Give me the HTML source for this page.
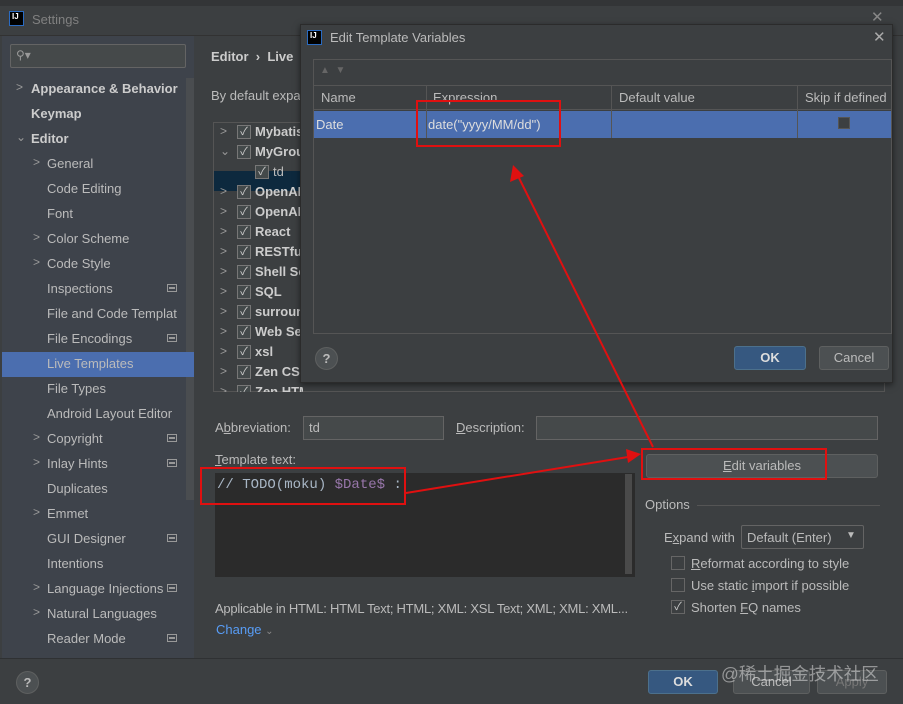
<!DOCTYPE html>
<html><head><meta charset="utf-8"><style>
*{margin:0;padding:0;box-sizing:border-box}
body{width:903px;height:704px;background:#3c3f41;font-family:"Liberation Sans","Noto Sans CJK SC",sans-serif;font-size:13px;color:#bbbbbb;position:relative;overflow:hidden}
.a{position:absolute;white-space:nowrap}
.side{left:2px;top:36px;width:192px;height:622px;background:#3e434b}
.si{position:absolute;left:47px;font-size:13px;color:#bbb}
.chev{position:absolute;font-size:12px;color:#999}
.bold{font-weight:bold;color:#ccc}
.pin{position:absolute;left:167px;width:10px;height:8px;border:1px solid #999;background:linear-gradient(#999,#999) center/6px 2px no-repeat}
.tr{position:absolute;left:0;height:20px;width:100%}
.cb{position:absolute;width:14px;height:14px;border:1px solid #777;background:#43494a;color:#ccc;font-size:11px;line-height:12px;text-align:center}
.btn{position:absolute;border:1px solid #5e6060;background:#4c5052;border-radius:3px;text-align:center;color:#bbb;line-height:22px}
.ok{background:#365880;border-color:#4c708c;font-weight:bold;color:#ddd}
.inp{position:absolute;border:1px solid #646464;background:#45494a}
.rb{position:absolute;border:2px solid #e01010}
.help{position:absolute;width:23px;height:23px;border-radius:50%;background:#4c5052;border:1px solid #5e6060;color:#bbb;text-align:center;line-height:21px;font-weight:bold}
</style></head><body>
<div class="a" style="left:0;top:0;width:903px;height:6px;background:#333537"></div>
<div class="a" style="left:0;top:35px;width:903px;height:1px;background:#323232"></div>
<div class="a" style="left:9px;top:11px;width:15px;height:15px;background:#000;border:1px solid #2a6bc2;color:#fff;font-size:8px;font-weight:bold;line-height:9px;padding-left:2px">IJ</div>
<div class="a" style="left:32px;top:12px;color:#808080;font-size:13px">Settings</div>
<div class="a" style="left:871px;top:8px;color:#888;font-size:15px">✕</div>

<div class="a side"></div>
<div class="inp" style="left:10px;top:44px;width:176px;height:24px;border-radius:2px;background:#45494a"></div>
<div class="a" style="left:16px;top:48px;color:#999;font-size:12px">⚲▾</div>
<div class="a" style="left:186px;top:78px;width:8px;height:422px;background:#4a4d50"></div>
<div class="a" style="left:2px;top:352px;width:192px;height:25px;background:#4b6eaf"></div>
<div class="a" style="left:0;top:0;width:195px;height:660px">
<span class="chev" style="left:16px;top:80px">&gt;</span><span class="si bold" style="left:31px;top:81px">Appearance &amp; Behavior</span>
<span class="si bold" style="left:31px;top:106px">Keymap</span>
<span class="chev" style="left:16px;top:130px">⌄</span><span class="si bold" style="left:31px;top:131px">Editor</span>
<span class="chev" style="left:33px;top:155px">&gt;</span><span class="si" style="top:156px">General</span>
<span class="si" style="top:181px">Code Editing</span>
<span class="si" style="top:206px">Font</span>
<span class="chev" style="left:33px;top:230px">&gt;</span><span class="si" style="top:231px">Color Scheme</span>
<span class="chev" style="left:33px;top:255px">&gt;</span><span class="si" style="top:256px">Code Style</span>
<span class="si" style="top:281px">Inspections</span><span class="pin" style="top:284px"></span>
<span class="si" style="top:306px">File and Code Templat</span>
<span class="si" style="top:331px">File Encodings</span><span class="pin" style="top:334px"></span>
<span class="si" style="top:356px">Live Templates</span>
<span class="si" style="top:381px">File Types</span>
<span class="si" style="top:406px">Android Layout Editor</span>
<span class="chev" style="left:33px;top:430px">&gt;</span><span class="si" style="top:431px">Copyright</span><span class="pin" style="top:434px"></span>
<span class="chev" style="left:33px;top:455px">&gt;</span><span class="si" style="top:456px">Inlay Hints</span><span class="pin" style="top:459px"></span>
<span class="si" style="top:481px">Duplicates</span>
<span class="chev" style="left:33px;top:505px">&gt;</span><span class="si" style="top:506px">Emmet</span>
<span class="si" style="top:531px">GUI Designer</span><span class="pin" style="top:534px"></span>
<span class="si" style="top:556px">Intentions</span>
<span class="chev" style="left:33px;top:580px">&gt;</span><span class="si" style="top:581px">Language Injections</span><span class="pin" style="top:584px"></span>
<span class="chev" style="left:33px;top:605px">&gt;</span><span class="si" style="top:606px">Natural Languages</span>
<span class="si" style="top:631px">Reader Mode</span><span class="pin" style="top:634px"></span>
</div>

<div class="a bold" style="left:211px;top:49px">Editor &nbsp;›&nbsp; Live</div>
<div class="a" style="left:211px;top:88px">By default expa</div>
<div class="a" style="left:213px;top:122px;width:672px;height:270px;border:1px solid #555;overflow:hidden">
<div class="tr" style="top:48px;background:#0d293e"></div>
</div>
<div class="a" style="left:213px;top:122px;width:90px;height:270px;overflow:hidden">
<span class="chev" style="left:7px;top:2px">&gt;</span><span class="cb" style="left:24px;top:3px">✓</span><span class="a bold" style="left:42px;top:2px">Mybatis</span>
<span class="chev" style="left:7px;top:22px">⌄</span><span class="cb" style="left:24px;top:23px">✓</span><span class="a bold" style="left:42px;top:22px">MyGroup</span>
<span class="cb" style="left:42px;top:43px">✓</span><span class="a" style="left:60px;top:42px">td</span>
<span class="chev" style="left:7px;top:62px">&gt;</span><span class="cb" style="left:24px;top:63px">✓</span><span class="a bold" style="left:42px;top:62px">OpenAI</span>
<span class="chev" style="left:7px;top:82px">&gt;</span><span class="cb" style="left:24px;top:83px">✓</span><span class="a bold" style="left:42px;top:82px">OpenAI</span>
<span class="chev" style="left:7px;top:102px">&gt;</span><span class="cb" style="left:24px;top:103px">✓</span><span class="a bold" style="left:42px;top:102px">React</span>
<span class="chev" style="left:7px;top:122px">&gt;</span><span class="cb" style="left:24px;top:123px">✓</span><span class="a bold" style="left:42px;top:122px">RESTful</span>
<span class="chev" style="left:7px;top:142px">&gt;</span><span class="cb" style="left:24px;top:143px">✓</span><span class="a bold" style="left:42px;top:142px">Shell Sc</span>
<span class="chev" style="left:7px;top:162px">&gt;</span><span class="cb" style="left:24px;top:163px">✓</span><span class="a bold" style="left:42px;top:162px">SQL</span>
<span class="chev" style="left:7px;top:182px">&gt;</span><span class="cb" style="left:24px;top:183px">✓</span><span class="a bold" style="left:42px;top:182px">surround</span>
<span class="chev" style="left:7px;top:202px">&gt;</span><span class="cb" style="left:24px;top:203px">✓</span><span class="a bold" style="left:42px;top:202px">Web Se</span>
<span class="chev" style="left:7px;top:222px">&gt;</span><span class="cb" style="left:24px;top:223px">✓</span><span class="a bold" style="left:42px;top:222px">xsl</span>
<span class="chev" style="left:7px;top:242px">&gt;</span><span class="cb" style="left:24px;top:243px">✓</span><span class="a bold" style="left:42px;top:242px">Zen CSS</span>
<span class="chev" style="left:7px;top:262px">&gt;</span><span class="cb" style="left:24px;top:263px">✓</span><span class="a bold" style="left:42px;top:262px">Zen HTML</span>
</div>

<!-- dialog -->
<div class="a" style="left:300px;top:24px;width:593px;height:359px;background:#3c3f41;border:1px solid #2b2b2b;box-shadow:0 2px 6px rgba(0,0,0,.5)">
<div class="a" style="left:6px;top:5px;width:15px;height:15px;background:#000;border:1px solid #2a6bc2;color:#fff;font-size:8px;font-weight:bold;line-height:9px;padding-left:2px">IJ</div>
<div class="a" style="left:29px;top:5px;color:#bbb">Edit Template Variables</div>
<div class="a" style="left:572px;top:3px;color:#aaa;font-size:15px">✕</div>
<div class="a" style="left:12px;top:34px;width:579px;height:275px;border:1px solid #555">
<div class="a" style="left:6px;top:5px;color:#666;font-size:10px">▲ &nbsp;▼</div>
<div class="a" style="left:0;top:25px;width:577px;height:25px;border-top:1px solid #555;border-bottom:1px solid #555;background:#3c3f41"></div>
<div class="a" style="left:0;top:51px;width:577px;height:27px;background:#4b6eaf"></div>
<div class="a" style="left:112px;top:25px;width:1px;height:53px;background:#555"></div>
<div class="a" style="left:297px;top:25px;width:1px;height:53px;background:#555"></div>
<div class="a" style="left:483px;top:25px;width:1px;height:53px;background:#555"></div>
<div class="a" style="left:7px;top:30px">Name</div>
<div class="a" style="left:119px;top:30px">Expression</div>
<div class="a" style="left:305px;top:30px">Default value</div>
<div class="a" style="left:491px;top:30px">Skip if defined</div>
<div class="a" style="left:2px;top:57px;color:#ddd">Date</div>
<div class="a" style="left:114px;top:57px;color:#ddd">date("yyyy/MM/dd")</div>
<div class="a" style="left:524px;top:57px;width:12px;height:12px;background:#3c3f41;border:1px solid #555"></div>
</div>
<div class="help" style="left:14px;top:322px">?</div>
<div class="btn ok" style="left:433px;top:321px;width:72px;height:24px">OK</div>
<div class="btn" style="left:518px;top:321px;width:70px;height:24px">Cancel</div>
</div>

<!-- lower -->
<div class="a" style="left:215px;top:420px">A<u>b</u>breviation:</div>
<div class="inp" style="left:303px;top:416px;width:141px;height:24px"></div>
<div class="a" style="left:309px;top:420px">td</div>
<div class="a" style="left:456px;top:420px"><u>D</u>escription:</div>
<div class="inp" style="left:536px;top:416px;width:342px;height:24px"></div>
<div class="a" style="left:215px;top:452px"><u>T</u>emplate text:</div>
<div class="a" style="left:215px;top:473px;width:420px;height:104px;background:#2b2b2b"></div>
<div class="a" style="left:625px;top:474px;width:7px;height:100px;background:#4a4a4a"></div>
<div class="a" style="left:217px;top:477px;font-family:'Liberation Mono',monospace;font-size:14px;color:#a9b7c6">// TODO(moku) <span style="color:#9876aa">$Date$</span> :</div>
<div class="btn" style="left:646px;top:454px;width:232px;height:24px"><u>E</u>dit variables</div>
<div class="a" style="left:645px;top:497px">Options</div>
<div class="a" style="left:697px;top:505px;width:183px;height:1px;background:#555"></div>
<div class="a" style="left:664px;top:530px">E<u>x</u>pand with</div>
<div class="inp" style="left:741px;top:525px;width:123px;height:24px;border-radius:2px;background:#3c3f41"></div>
<div class="a" style="left:747px;top:530px">Default (Enter)</div>
<div class="a" style="left:846px;top:530px;font-size:10px;color:#bbb">▼</div>
<div class="cb" style="left:671px;top:556px;background:#3c3f41;border-color:#666"></div><div class="a" style="left:691px;top:556px"><u>R</u>eformat according to style</div>
<div class="cb" style="left:671px;top:578px;background:#3c3f41;border-color:#666"></div><div class="a" style="left:691px;top:578px">Use static <u>i</u>mport if possible</div>
<div class="cb" style="left:671px;top:600px;background:#3c3f41;border-color:#666">✓</div><div class="a" style="left:691px;top:600px">Shorten <u>F</u>Q names</div>
<div class="a" style="left:215px;top:601px;letter-spacing:-0.25px">Applicable in HTML: HTML Text; HTML; XML: XSL Text; XML; XML: XML...</div>
<div class="a" style="left:216px;top:622px;color:#589df6">Change <span style="font-size:10px;color:#888">⌄</span></div>

<div class="a" style="left:0;top:658px;width:903px;height:1px;background:#2f3133"></div>
<div class="help" style="left:16px;top:671px">?</div>
<div class="btn ok" style="left:648px;top:670px;width:70px;height:24px">OK</div>
<div class="btn" style="left:733px;top:670px;width:77px;height:24px">Cancel</div>
<div class="btn" style="left:817px;top:670px;width:70px;height:24px;color:#777">Apply</div>
<div class="a" style="left:721px;top:661px;font-size:17.5px;color:rgba(220,220,220,.55)">@稀土掘金技术社区</div>

<!-- annotations -->
<div class="rb" style="left:416px;top:100px;width:145px;height:47px"></div>
<div class="rb" style="left:200px;top:467px;width:206px;height:38px"></div>
<div class="rb" style="left:641px;top:448px;width:186px;height:32px"></div>
<svg class="a" style="left:0;top:0" width="903" height="704">
<line x1="406" y1="493" x2="628" y2="457" stroke="#e01010" stroke-width="2"/>
<polygon points="641,454 626,449 628,463" fill="#e01010"/>
<line x1="653" y1="447" x2="519" y2="178" stroke="#e01010" stroke-width="2"/>
<polygon points="513,165 510,182 524,176" fill="#e01010"/>
</svg>
</body></html>
